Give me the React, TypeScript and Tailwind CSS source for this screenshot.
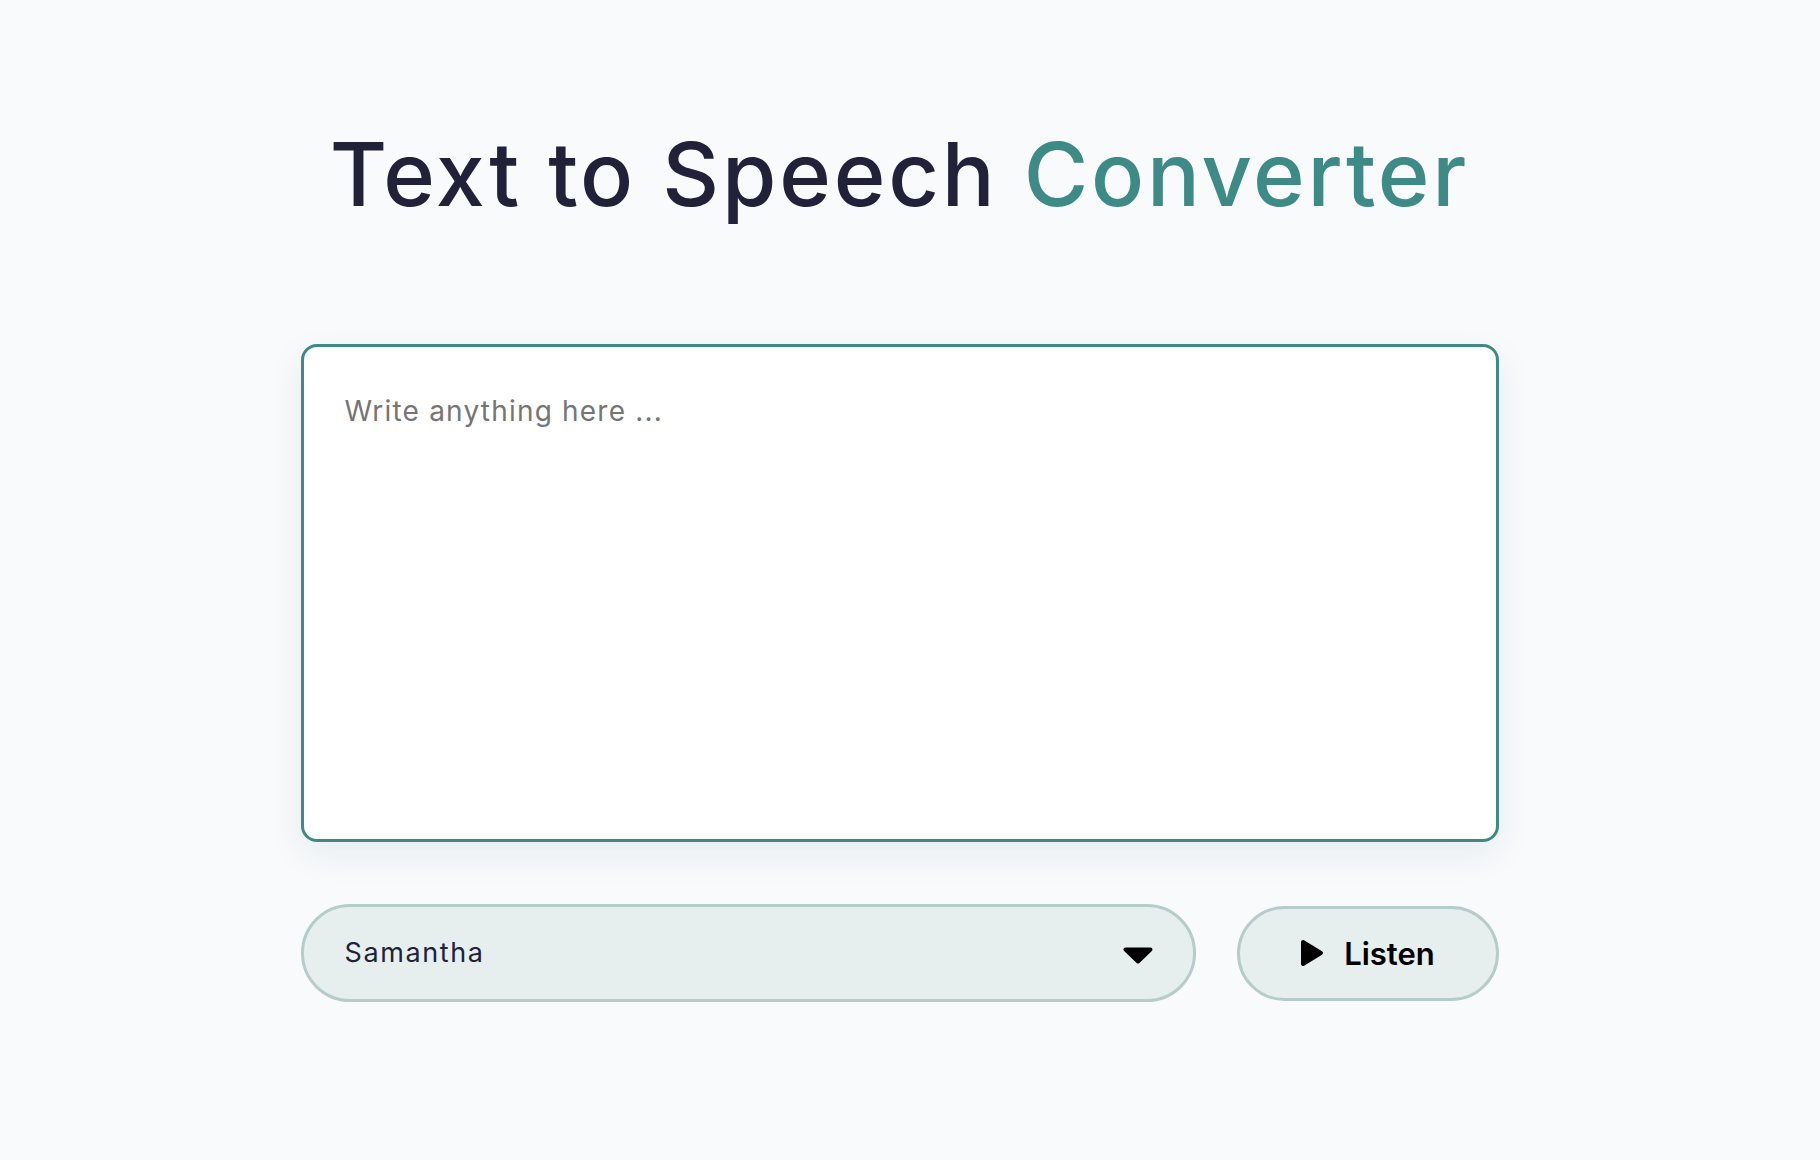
import React, { useState } from 'react';

const voices = ['Samantha', 'Alex', 'Daniel', 'Karen', 'Moira'];

const PlayIcon = () => (
    <svg width="24" height="28" viewBox="0 0 24 28" aria-hidden="true">
        <polygon
            points="3,3 21,14 3,25"
            fill="#000"
            stroke="#000"
            strokeWidth="4"
            strokeLinejoin="round"
        />
    </svg>
);

const CaretIcon = () => (
    <svg width="30" height="17" viewBox="0 0 30 17" aria-hidden="true">
        <polygon
            points="2.5,2.5 27.5,2.5 15,14.5"
            fill="#000"
            stroke="#000"
            strokeWidth="4"
            strokeLinejoin="round"
        />
    </svg>
);

export default function App() {
    const [text, setText] = useState('');
    const [voice, setVoice] = useState('Samantha');

    return (
        <div
            className="min-h-screen bg-[#f8fafc] pr-[21px]"
            style={{ fontFamily: 'Inter, "Noto Sans", sans-serif' }}
        >
            <div className="mx-auto flex w-[1198px] flex-col pt-[118px]">
                <h1 className="text-center text-[88px] font-medium leading-[112px] tracking-[2.8px] text-[#212239]">
                    Text to Speech{' '}
                    <span className="text-[#3e8a86]">Converter</span>
                </h1>

                <textarea
                    value={text}
                    onChange={(e) => setText(e.target.value)}
                    placeholder="Write anything here ..."
                    className="mt-[114px] h-[498px] w-full resize-none rounded-[16px] border-[3px] border-[#3d8a87] bg-white px-[41px] pt-[44px] text-[28px] leading-[40px] tracking-[1.2px] text-[#212239] shadow-[0_12px_36px_rgba(30,60,80,0.07)] outline-none placeholder:text-[#757575]"
                />

                <div className="mt-[62px] flex items-center gap-[41px]">
                    <div className="relative flex-1">
                        <select
                            value={voice}
                            onChange={(e) => setVoice(e.target.value)}
                            className="h-[98px] w-full appearance-none rounded-full border-[3.5px] border-[#b5cccb] bg-[#e6efee] pl-[41px] pr-[80px] text-[27px] tracking-[1.6px] text-[#212239] outline-none"
                        >
                            {voices.map((v) => (
                                <option key={v} value={v}>
                                    {v}
                                </option>
                            ))}
                        </select>
                        <span className="pointer-events-none absolute right-[43px] top-[43px] flex">
                            <CaretIcon />
                        </span>
                    </div>

                    <button className="flex h-[95px] w-[262px] items-center justify-center gap-[20px] rounded-full border-[3.5px] border-[#b5cccb] bg-[#e6efee] text-[31px] font-semibold text-black">
                        <PlayIcon />
                        <span className="leading-none">Listen</span>
                    </button>
                </div>
            </div>
        </div>
    );
}
